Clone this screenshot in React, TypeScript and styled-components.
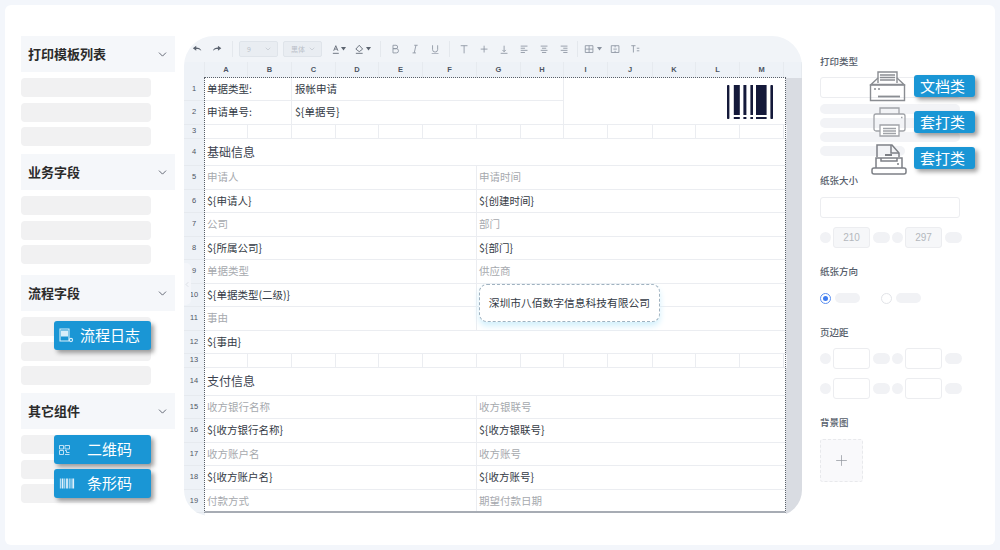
import React from 'react';
import styled, { createGlobalStyle } from 'styled-components';
import { ChevronDown, ChevronLeft, Plus } from 'lucide-react';

const GlobalStyle = createGlobalStyle`
  html, body {
    margin: 0;
    padding: 0;
    background: #f3f6fb;
    font-family: "Noto Sans CJK SC", "Noto Sans", sans-serif;
  }
  * { box-sizing: border-box; }
`;

const Page = styled.div`
  width: 1000px;
  height: 550px;
  padding: 5px;
  overflow: hidden;
`;

const Card = styled.div`
  display: flex;
  align-items: flex-start;
  height: 540px;
  padding: 31px 0 0 16px;
  background: #fff;
  border-radius: 6px;
`;

/* left column */
const LeftColumn = styled.div`
  display: flex;
  flex-direction: column;
  width: 154px;
  margin-right: 9px;
`;

const Section = styled.section<{ $after: number }>`
  position: relative;
  margin-bottom: ${p => p.$after}px;
`;

const SectionHeader = styled.div`
  display: flex;
  align-items: center;
  justify-content: space-between;
  height: 36px;
  padding: 0 6px 2px 7px;
  background: #f5f7fa;
  color: #2b2b2b;
  font-size: 13px;
  font-weight: 700;
  svg { color: #454b5a; margin-top: 2px; }
`;

const SkeletonList = styled.div`
  display: flex;
  flex-direction: column;
  gap: 5.5px;
  margin-top: 6px;
`;

const SkeletonItem = styled.div`
  width: 130px;
  height: 19px;
  background: #f1f1f2;
  border-radius: 4px;
`;

const Tag = styled.div<{ $top: number; $slot: number }>`
  position: absolute;
  top: ${p => p.$top}px;
  left: 33px;
  display: grid;
  grid-template-columns: ${p => p.$slot}px auto;
  align-items: center;
  width: 97px;
  height: 29px;
  padding-bottom: 2px;
  background: #1a96d5;
  border-radius: 3px;
  box-shadow: 3px 3px 4px rgba(50, 50, 50, 0.45);
  color: #fff;
  font-size: 15px;
  svg { margin: 2px 0 0 5px; }
`;

/* spreadsheet */
const Sheet = styled.div`
  position: relative;
  flex: none;
  width: 618px;
  height: 480px;
  background: #fff;
  border-radius: 30px 30px 26px 26px;
  overflow: hidden;
`;

const Toolbar = styled.div`
  display: flex;
  align-items: center;
  height: 26px;
  padding-left: 3px;
  background: #f1f4f8;
`;

const Tool = styled.div<{ $wide?: boolean; $dark?: boolean }>`
  display: flex;
  align-items: center;
  justify-content: center;
  width: ${p => (p.$wide ? 24 : 20)}px;
  height: 16px;
  color: ${p => (p.$dark ? '#5c6470' : '#8b93a0')};
  font-size: 9px;
`;

const Separator = styled.div<{ $left: number; $right: number }>`
  width: 1px;
  height: 16px;
  margin: 0 ${p => p.$right}px 0 ${p => p.$left}px;
  background: #e4e8ed;
`;

const FakeSelect = styled.div<{ $gap: number }>`
  display: flex;
  align-items: center;
  justify-content: space-between;
  width: 39px;
  height: 16px;
  margin-right: ${p => p.$gap}px;
  padding: 0 5px 0 7px;
  background: #e9edf2;
  border: 1px solid #dfe4ea;
  border-radius: 2px;
  color: #b9bfc8;
  font-size: 7px;
  svg { color: #bcc2ca; }
`;

const Grid = styled.div`
  display: grid;
  grid-template-columns: 21px 43px 44px 44px 43px 44px 54px 44px 43px 44px 45px 43px 44px 44px 2px 16px;
  grid-template-rows: 16px 23px 24px 14px 27px 24px 23px 24px 23px 24px 23px 24px 23px 14px 28px 23px 24px 23px 24px 23px 3px;
  height: 454px;
`;

const ColumnHead = styled.div<{ $span?: number }>`
  grid-column: span ${p => p.$span ?? 1};
  display: flex;
  align-items: center;
  justify-content: center;
  padding-bottom: 1px;
  background: #eef2f7;
  border-right: 1px solid #e6eaef;
  color: #4d5563;
  font-family: "Liberation Sans", sans-serif;
  font-size: 7.5px;
  font-weight: 700;
`;

const RowHead = styled.div`
  grid-column: 1;
  display: flex;
  align-items: center;
  justify-content: center;
  padding: 0 1px 2px 0;
  background: #eef2f7;
  border-bottom: 1px solid #e6eaef;
  color: #4d5563;
  font-family: "Liberation Sans", sans-serif;
  font-size: 7.5px;
`;

const toneColors = { value: '#333a44', label: '#a6a9ae', title: '#3c4350' };

const Cell = styled.div<{ $span?: number; $rows?: number; $tone?: keyof typeof toneColors; $inset?: number }>`
  grid-column: span ${p => p.$span ?? 1};
  grid-row: span ${p => p.$rows ?? 1};
  display: flex;
  align-items: center;
  min-width: 0;
  padding: 0 0 2px ${p => p.$inset ?? 2}px;
  background: #fff;
  border-right: 1px solid #ebedf1;
  border-bottom: 1px solid #ebedf1;
  color: ${p => toneColors[p.$tone ?? 'value']};
  font-size: ${p => (p.$tone === 'title' ? 12 : 10.5)}px;
  white-space: nowrap;
`;

const BarcodeCell = styled(Cell)`
  align-items: flex-start;
  justify-content: flex-end;
  padding: 7px 12px 0 0;
`;

const RowEnd = styled.div`
  background: #fff;
`;

const ScrollTrack = styled.div`
  grid-column: 16;
  grid-row: 2 / -1;
  background: #d9dce2;
`;

const FootHead = styled.div`
  grid-column: 1;
  background: #eef2f7;
`;

const Selection = styled.div`
  position: absolute;
  top: 41px;
  left: 20px;
  width: 582px;
  height: 436px;
  border: 1px dotted #5a6068;
  border-bottom: 2px solid #a7acb4;
  pointer-events: none;
`;

const CollapseHandle = styled.div`
  position: absolute;
  top: 227px;
  left: 0;
  display: flex;
  align-items: center;
  width: 7px;
  height: 42px;
  background: #f4f6fa;
  border-radius: 0 5px 5px 0;
  color: #c4c9d1;
  svg { margin-left: -1px; }
`;

const CompanyBadge = styled.div`
  position: absolute;
  top: 248px;
  left: 295px;
  display: flex;
  align-items: center;
  justify-content: center;
  width: 181px;
  height: 38px;
  padding-bottom: 2px;
  background: #fff;
  border: 1px dashed #9fb2c0;
  border-radius: 8px;
  box-shadow: 0 4px 6px #d3f0fc;
  color: #333a44;
  font-size: 10.75px;
  white-space: nowrap;
`;

/* right column */
const RightColumn = styled.div`
  position: relative;
  width: 142px;
  margin-left: 18px;
  padding-top: 18px;
`;

const FieldLabel = styled.div<{ $top?: number }>`
  height: 14px;
  margin-top: ${p => p.$top ?? 0}px;
  color: #555d6a;
  font-size: 9.5px;
  font-weight: 500;
  line-height: 14px;
`;

const TextInput = styled.div<{ $top: number }>`
  width: 140px;
  height: 21px;
  margin-top: ${p => p.$top}px;
  background: #fff;
  border: 1px solid #ecedf0;
  border-radius: 3px;
`;

const PillStack = styled.div`
  display: flex;
  flex-direction: column;
  gap: 4px;
  margin-top: 6px;
`;

const BarPill = styled.div<{ $width: number }>`
  width: ${p => p.$width}px;
  height: 10px;
  background: #f2f3f6;
  border-radius: 5px;
`;

const MarginRow = styled.div<{ $top: number }>`
  display: flex;
  align-items: center;
  height: 21px;
  margin-top: ${p => p.$top}px;
`;

const Dot = styled.div<{ $left?: number }>`
  flex: none;
  width: 11px;
  height: 11px;
  margin-left: ${p => p.$left ?? 0}px;
  background: #f1f2f5;
  border-radius: 50%;
`;

const SmallPill = styled.div`
  flex: none;
  width: 17px;
  height: 11px;
  margin-left: 3px;
  background: #f1f2f5;
  border-radius: 6px;
`;

const NumberBox = styled.div<{ $filled?: boolean }>`
  flex: none;
  display: flex;
  align-items: center;
  justify-content: center;
  width: 37px;
  height: 21px;
  margin-left: 2px;
  background: ${p => (p.$filled ? '#f6f7f9' : '#fff')};
  border: 1px solid #ecedf0;
  border-radius: 3px;
  color: #b4b7bd;
  font-family: "Liberation Sans", sans-serif;
  font-size: 10px;
`;

const RadioRow = styled.div`
  display: flex;
  align-items: center;
  height: 12px;
  margin-top: 14px;
`;

const Radio = styled.div<{ $checked?: boolean; $left?: number }>`
  flex: none;
  display: flex;
  align-items: center;
  justify-content: center;
  width: 11px;
  height: 11px;
  margin-left: ${p => p.$left ?? 0}px;
  background: #fff;
  border: 1px solid ${p => (p.$checked ? '#5b8ff0' : '#e2e4e8')};
  border-radius: 50%;
  &::after {
    content: '';
    display: ${p => (p.$checked ? 'block' : 'none')};
    width: 5px;
    height: 5px;
    background: #3f7df0;
    border-radius: 50%;
  }
`;

const RadioPill = styled.div`
  flex: none;
  width: 25px;
  height: 10px;
  margin-left: 4px;
  background: #f1f2f5;
  border-radius: 5px;
`;

const UploadBox = styled.div`
  display: flex;
  align-items: center;
  justify-content: center;
  width: 43px;
  height: 43px;
  margin-top: 10px;
  background: #f9f9fb;
  border: 1px dashed #e8e9ec;
  border-radius: 3px;
  color: #8f939b;
`;

const TypeTag = styled.div<{ $top: number }>`
  position: absolute;
  top: ${p => p.$top}px;
  left: 94px;
  display: flex;
  align-items: center;
  justify-content: center;
  width: 61px;
  height: 22px;
  padding: 0 4px 2px 0;
  background: #1a96d5;
  border-radius: 3px;
  box-shadow: 3px 3px 4px rgba(50, 50, 50, 0.45);
  color: #fff;
  font-size: 15px;
`;

const PrinterSlot = styled.div<{ $top: number; $left: number }>`
  position: absolute;
  top: ${p => p.$top}px;
  left: ${p => p.$left}px;
  display: flex;
`;

const letters = 'ABCDEFGHIJKLM'.split('');

type CellData = { text?: string; span?: number; tone?: 'value' | 'label' | 'title'; inset?: number };

const pair = (left: string, right: string, tone: 'value' | 'label'): CellData[] => [
  { text: left, span: 6, tone },
  { text: right, span: 8, tone },
];

const blank: CellData[] = [...letters.map(() => ({})), { span: 1 }];

const rows: CellData[][] = [
  [{ text: '单据类型:', span: 2 }, { text: '报帐申请', span: 6, inset: 3 }],
  [{ text: '申请单号:', span: 2 }, { text: '${单据号}', span: 6, inset: 3 }],
  blank,
  [{ text: '基础信息', span: 14, tone: 'title' }],
  pair('申请人', '申请时间', 'label'),
  pair('${申请人}', '${创建时间}', 'value'),
  pair('公司', '部门', 'label'),
  pair('${所属公司}', '${部门}', 'value'),
  pair('单据类型', '供应商', 'label'),
  pair('${单据类型(二级)}', '', 'value'),
  pair('事由', '', 'label'),
  [{ text: '${事由}', span: 14 }],
  blank,
  [{ text: '支付信息', span: 14, tone: 'title' }],
  pair('收方银行名称', '收方银联号', 'label'),
  pair('${收方银行名称}', '${收方银联号}', 'value'),
  pair('收方账户名', '收方账号', 'label'),
  pair('${收方账户名}', '${收方账号}', 'value'),
  pair('付款方式', '期望付款日期', 'label'),
];

const Glyph = ({ d, fill, w = 12 }: { d: string; fill?: boolean; w?: number }) => (
  <svg width={w * 0.85} height="10.2" viewBox={`0 0 ${w} 12`} fill={fill ? 'currentColor' : 'none'} stroke={fill ? 'none' : 'currentColor'} strokeWidth="1">
    <path d={d} />
  </svg>
);

const Caret = () => (
  <svg width="5" height="4" viewBox="0 0 5 4" fill="currentColor" style={{ marginLeft: 2 }}>
    <path d="M0 0h5L2.5 3.500z" />
  </svg>
);

const Barcode = () => (
  <svg width="46" height="34" viewBox="0 0 46 34" fill="#14193a">
    <rect x="0" y="0" width="2.4" height="34" rx="0.8" />
    <rect x="6.8" y="0" width="6" height="30" />
    <rect x="6.8" y="32" width="6" height="2" />
    <rect x="16.4" y="0" width="3" height="30" />
    <rect x="16.4" y="32" width="3" height="2" />
    <rect x="23.4" y="0" width="2.6" height="30" />
    <rect x="23.4" y="32" width="2.6" height="2" />
    <rect x="29" y="0" width="10.6" height="30" />
    <rect x="29" y="32" width="10.6" height="2" />
    <rect x="43.4" y="0" width="2.6" height="34" rx="0.8" />
  </svg>
);

const DocumentPrinter = () => (
  <svg width="38" height="31" viewBox="0 0 38 31" fill="none" stroke="#8a8d92" strokeWidth="1.4">
    <path d="M9 12V1h19v11" />
    <path d="M11 4h15M11 6.500h15M11 9h15" />
    <path d="M9 7 2 13.500h33L28 7" />
    <path d="M1.500 14h34v15.500h-34z" />
    <path d="M9 25.500h22" strokeWidth="1.8" />
    <path d="M5 18h2M9 18h2" />
  </svg>
);

const OfficePrinter = () => (
  <svg width="34" height="30" viewBox="0 0 34 30" fill="none" stroke="#a0a3a8" strokeWidth="1.3">
    <path d="M7 7V1h19v6" />
    <path d="M7 24H3a2 2 0 0 1-2-2V9a2 2 0 0 1 2-2h27a2 2 0 0 1 2 2v13a2 2 0 0 1-2 2h-4" />
    <path d="M7 18h19v11H7z" fill="#fff" />
    <path d="M10 21.500h13M10 24h13M10 26.500h13" />
    <path d="M28 10.500h1.500" />
  </svg>
);

const TrayPrinter = () => (
  <svg width="36" height="32" viewBox="0 0 36 32" fill="none" stroke="#7d8086" strokeWidth="1.5">
    <path d="M6 14V2h15l7 8v4" />
    <path d="M20 2v8h8" />
    <path d="M14 12h7" strokeWidth="2" />
    <path d="M5 25V15h26v10" />
    <path d="M10 15v3h16v-3" />
    <path d="M26 21h2" />
    <path d="M3 25h30a2 2 0 0 1 2 2v2a2 2 0 0 1-2 2H3a2 2 0 0 1-2-2v-2a2 2 0 0 1 2-2z" />
  </svg>
);

const LogIcon = () => (
  <svg width="15" height="15" viewBox="0 0 15 15" fill="none" stroke="#d8eefa" strokeWidth="1.1">
    <path d="M1 1h9v12H1z" />
    <path d="M2.500 3h6v5h-6z" fill="#d8eefa" />
    <circle cx="12" cy="12" r="1.6" />
  </svg>
);

const QrIcon = () => (
  <svg width="11" height="10" viewBox="0 0 11 10" fill="none" stroke="#cfe9f8" strokeWidth="0.9">
    <path d="M.5.500h4v3.500h-4zM6 .500h4.500v3.500H6zM.5 5.500h4V9.500h-4z" />
    <path d="M6 5.500h1.500v2h3M6 9.500h4.500" />
  </svg>
);

const BarsIcon = () => (
  <svg width="16" height="11" viewBox="0 0 18 11" fill="#dff0fb">
    <path d="M1 0h1v11H1zM3 0h2v11H3zM6 0h1v11H6zM8 0h2v11H8zM11 0h1v11h-1zM13 0h1v11h-1zM15 0h2v11h-2z" />
  </svg>
);

const LeftSection = ({ title, after, children }: { title: string; after: number; children?: React.ReactNode }) => (
  <Section $after={after}>
    <SectionHeader>
      {title}
      <ChevronDown size={13} strokeWidth={1.5} />
    </SectionHeader>
    <SkeletonList>
      <SkeletonItem />
      <SkeletonItem />
      <SkeletonItem />
    </SkeletonList>
    {children}
  </Section>
);

const MarginLine = ({ top, a, b }: { top: number; a?: string; b?: string }) => (
  <MarginRow $top={top}>
    <Dot />
    <NumberBox $filled={!!a}>{a}</NumberBox>
    <SmallPill />
    <Dot $left={2} />
    <NumberBox $filled={!!b}>{b}</NumberBox>
    <SmallPill />
  </MarginRow>
);

const App = () => (
  <Page>
    <GlobalStyle />
    <Card>
      <LeftColumn>
        <LeftSection title="打印模板列表" after={8} />
        <LeftSection title="业务字段" after={11} />
        <LeftSection title="流程字段" after={8}>
          <Tag $top={46} $slot={26}><LogIcon />流程日志</Tag>
        </LeftSection>
        <LeftSection title="其它组件" after={0}>
          <Tag $top={42} $slot={33}><QrIcon />二维码</Tag>
          <Tag $top={76} $slot={33}><BarsIcon />条形码</Tag>
        </LeftSection>
      </LeftColumn>

      <Sheet>
        <Toolbar>
          <Tool $dark><Glyph fill d="M1 5l4-3v2c3 0 5 1 6 4-2-1.500-3.500-2-6-2v2z" /></Tool>
          <Tool $dark><Glyph fill d="M11 5 7 2v2C4 4 2 5 1 8c2-1.500 3.500-2 6-2v2z" /></Tool>
          <Separator $left={5} $right={6} />
          <FakeSelect $gap={5}>9<ChevronDown size={8} /></FakeSelect>
          <FakeSelect $gap={5}>黑体<ChevronDown size={8} /></FakeSelect>
          <Tool $wide $dark>
            <Glyph w={9} d="M2 8l2.500-6L7 8M3 6h3M1 11h7" />
            <Caret />
          </Tool>
          <Tool $wide $dark>
            <Glyph w={10} d="M5 1.500 9 6 5 9 1 6zM1 11h8" />
            <Caret />
          </Tool>
          <Separator $left={5} $right={4} />
          <Tool><Glyph d="M3.500 1.500h3.500a2 2 0 0 1 0 4H3.500zM3.500 5.500h4a2.300 2.300 0 0 1 0 5h-4z" /></Tool>
          <Tool><Glyph d="M5 1.500h4M3 10.500h4M7 1.500 5 10.500" /></Tool>
          <Tool><Glyph d="M3 1.500v5a3 3 0 0 0 6 0v-5M2 11.500h8" /></Tool>
          <Separator $left={4} $right={4} />
          <Tool><Glyph d="M2 2h8M6 2v9" /></Tool>
          <Tool><Glyph d="M6 2v8M2 6h8" /></Tool>
          <Tool><Glyph d="M6 2v7M4 7l2 2 2-2M2 11h8" /></Tool>
          <Tool><Glyph d="M2 2.500h8M2 5h5M2 7.500h8M2 10h5" /></Tool>
          <Tool><Glyph d="M2 2.500h8M3.500 5h5M2 7.500h8M3.500 10h5" /></Tool>
          <Tool><Glyph d="M2 2.500h8M5 5h5M2 7.500h8M5 10h5" /></Tool>
          <Separator $left={3} $right={3} />
          <Tool $wide>
            <Glyph d="M1.500 2h9v8h-9zM1.500 6h9M6 2v8" />
            <Caret />
          </Tool>
          <Tool><Glyph d="M1.500 2h9v8h-9zM4 6h4M6 2v2M6 8v2" /></Tool>
          <Tool><Glyph d="M1.500 2h5M4 2v8M8 5h3M8 8h3" /></Tool>
        </Toolbar>

        <Grid>
          <ColumnHead />
          {letters.map(l => <ColumnHead key={l}>{l}</ColumnHead>)}
          <ColumnHead $span={2} />
          <ScrollTrack />
          {rows.map((cells, i) => (
            <React.Fragment key={i}>
              <RowHead>{i + 1}</RowHead>
              {cells.map((c, j) => (
                <Cell key={j} $span={c.span} $tone={c.tone} $inset={c.inset}>{c.text}</Cell>
              ))}
              {i === 0 && <BarcodeCell $span={6} $rows={2}><Barcode /></BarcodeCell>}
            </React.Fragment>
          ))}
          <FootHead />
          <RowEnd />
        </Grid>

        <Selection />
        <CollapseHandle><ChevronLeft size={9} strokeWidth={1.5} /></CollapseHandle>
        <CompanyBadge>深圳市八佰数字信息科技有限公司</CompanyBadge>
      </Sheet>

      <RightColumn>
        <FieldLabel>打印类型</FieldLabel>
        <TextInput $top={9} />
        <PillStack>
          <BarPill $width={140} />
          <BarPill $width={140} />
          <BarPill $width={140} />
          <BarPill $width={85} />
        </PillStack>
        <FieldLabel $top={17}>纸张大小</FieldLabel>
        <TextInput $top={10} />
        <MarginLine top={9} a="210" b="297" />
        <FieldLabel $top={16}>纸张方向</FieldLabel>
        <RadioRow>
          <Radio $checked />
          <RadioPill />
          <Radio $left={21} />
          <RadioPill />
        </RadioRow>
        <FieldLabel $top={21}>页边距</FieldLabel>
        <MarginLine top={9} />
        <MarginLine top={9} />
        <FieldLabel $top={16}>背景图</FieldLabel>
        <UploadBox><Plus size={17} strokeWidth={1} /></UploadBox>

        <PrinterSlot $top={35} $left={49}><DocumentPrinter /></PrinterSlot>
        <TypeTag $top={39}>文档类</TypeTag>
        <PrinterSlot $top={71} $left={53}><OfficePrinter /></PrinterSlot>
        <TypeTag $top={75}>套打类</TypeTag>
        <PrinterSlot $top={107} $left={51}><TrayPrinter /></PrinterSlot>
        <TypeTag $top={111}>套打类</TypeTag>
      </RightColumn>
    </Card>
  </Page>
);

export default App;
